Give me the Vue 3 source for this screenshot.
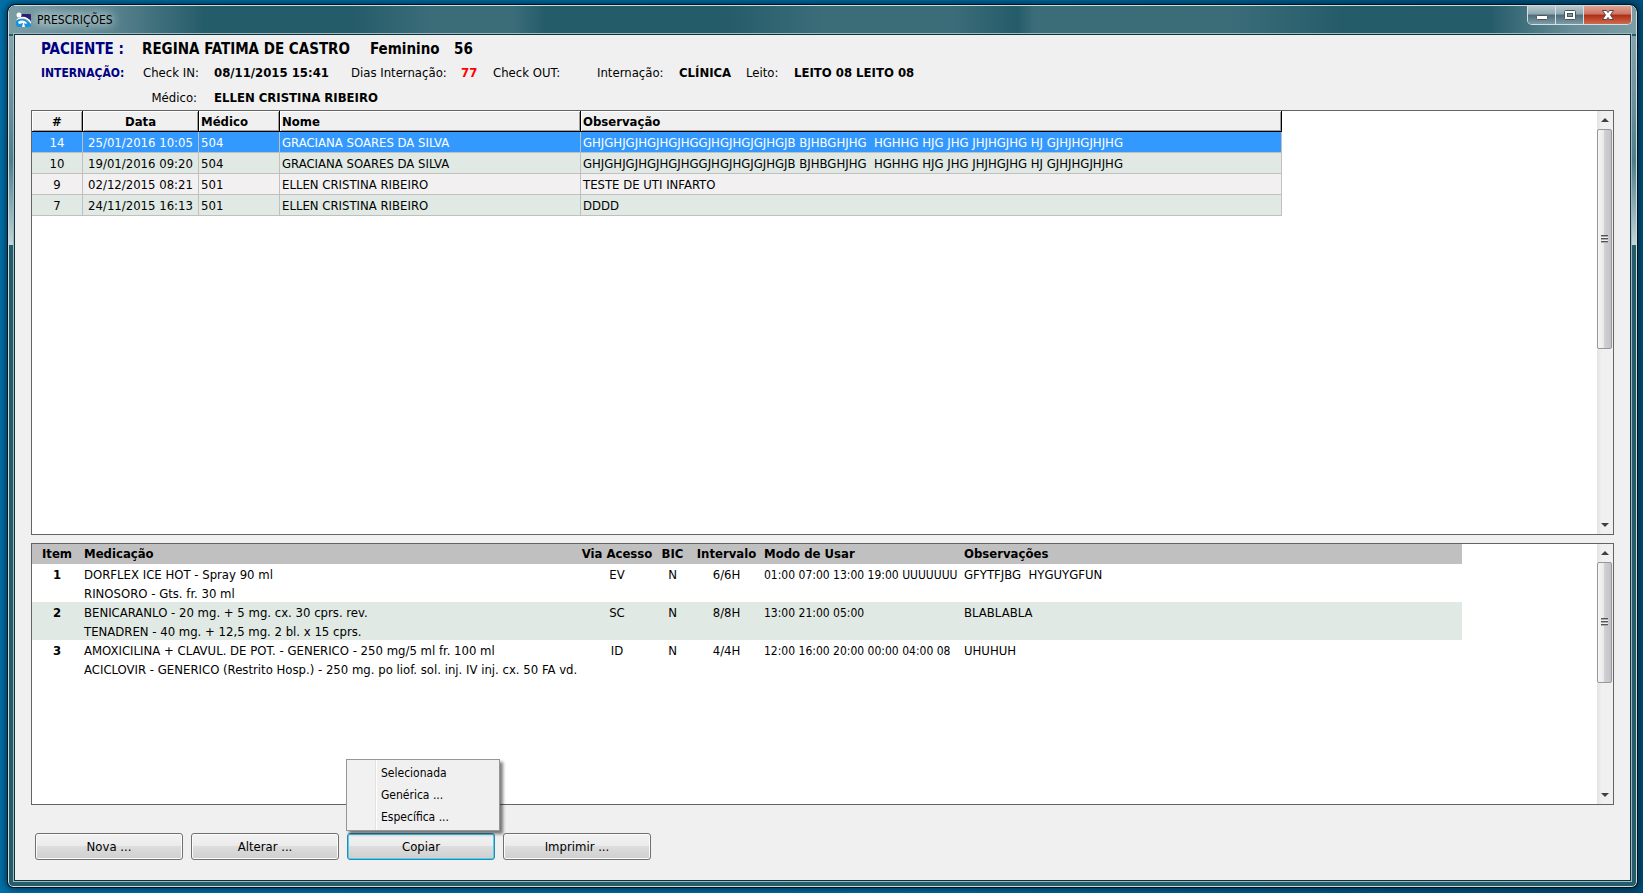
<script setup>
const visits = [
  { id: '14', date: '25/01/2016 10:05', code: '504', name: 'GRACIANA SOARES DA SILVA', note: 'GHJGHJGJHGJHGJHGGJHGJHGJGJHGJB BJHBGHJHG  HGHHG HJG JHG JHJHGJHG HJ GJHJHGJHJHG' },
  { id: '10', date: '19/01/2016 09:20', code: '504', name: 'GRACIANA SOARES DA SILVA', note: 'GHJGHJGJHGJHGJHGGJHGJHGJGJHGJB BJHBGHJHG  HGHHG HJG JHG JHJHGJHG HJ GJHJHGJHJHG' },
  { id: '9', date: '02/12/2015 08:21', code: '501', name: 'ELLEN CRISTINA RIBEIRO', note: 'TESTE DE UTI INFARTO' },
  { id: '7', date: '24/11/2015 16:13', code: '501', name: 'ELLEN CRISTINA RIBEIRO', note: 'DDDD' },
]
const items = [
  { n: '1', meds: ['DORFLEX ICE HOT - Spray 90 ml', 'RINOSORO - Gts. fr. 30 ml'], via: 'EV', bic: 'N', every: '6/6H', use: '01:00 07:00 13:00 19:00 UUUUUUU', obs: 'GFYTFJBG  HYGUYGFUN' },
  { n: '2', meds: ['BENICARANLO - 20 mg. + 5 mg. cx. 30 cprs. rev.', 'TENADREN - 40 mg. + 12,5 mg. 2 bl. x 15 cprs.'], via: 'SC', bic: 'N', every: '8/8H', use: '13:00 21:00 05:00', obs: 'BLABLABLA' },
  { n: '3', meds: ['AMOXICILINA + CLAVUL. DE POT. - GENERICO - 250 mg/5 ml fr. 100 ml', 'ACICLOVIR - GENERICO (Restrito Hosp.) - 250 mg. po liof. sol. inj. IV inj. cx. 50 FA vd.'], via: 'ID', bic: 'N', every: '4/4H', use: '12:00 16:00 20:00 00:00 04:00 08', obs: 'UHUHUH' },
]
</script>

<template>
  <div class="desktop">
    <div class="window">
      <header class="titlebar">
        <svg class="app-icon" viewBox="0 0 16 16" aria-hidden="true">
          <path d="M4 2h10q1 0 1 1v6C12 5 7 4 3 6z" fill="#2b1d72" />
          <path d="M1 7c5-4 11-2 14 3v2C11 6 5 5 0 9z" fill="#fff" />
          <path d="M0 9c4-3 9-2 11 0l4 3v2q0 1-1 1H2q-1 0-2-2z" fill="#1593df" />
          <path d="M2 10c3-2 6-2 9 1l-1 1-2-1 1 4H6l1-4-4 1z" fill="#fff" />
          <circle cx="3" cy="3" r="2.500" fill="#fff" />
        </svg>
        <h1>PRESCRIÇÕES</h1>
        <div class="controls">
          <button type="button" aria-label="Minimizar">
            <svg viewBox="0 0 14 12"><rect x="1.500" y="6.500" width="11" height="4" rx="1" fill="#fff" stroke="#4a5560" /></svg>
          </button>
          <button type="button" aria-label="Maximizar">
            <svg viewBox="0 0 14 12"><rect x="1.500" y="1.500" width="11" height="9" rx="1" fill="#fff" stroke="#4a5560" /><rect x="4.500" y="4.500" width="5" height="3" fill="#7d98a3" stroke="#4a5560" /></svg>
          </button>
          <button type="button" class="close" aria-label="Fechar">
            <svg viewBox="0 0 14 12"><path d="M1.500 1.500h4L7 3.500l1.500-2h4L9.500 6l3 4.500h-4L7 8.500l-1.500 2h-4L4.500 6z" fill="#fff" stroke="#5a4650" /></svg>
          </button>
        </div>
      </header>

      <main class="client">
        <section class="patient">
          <div class="line name-line">
            <span class="blue">PACIENTE :</span><strong>REGINA FATIMA DE CASTRO</strong><strong>Feminino</strong><strong>56</strong>
          </div>
          <div class="line stay-line">
            <span class="blue">INTERNAÇÃO:</span>
            <span>Check IN:</span><strong>08/11/2015 15:41</strong>
            <span>Dias Internação:</span><strong class="red">77</strong>
            <span>Check OUT:</span>
            <span>Internação:</span><strong>CLÍNICA</strong>
            <span>Leito:</span><strong>LEITO 08 LEITO 08</strong>
          </div>
          <div class="line doctor-line">
            <span class="right">Médico:</span><strong>ELLEN CRISTINA RIBEIRO</strong>
          </div>
        </section>

        <section class="panel visits">
          <div class="view">
            <table>
              <colgroup><col class="v1" /><col class="v2" /><col class="v3" /><col class="v4" /><col class="v5" /></colgroup>
              <thead>
                <tr><th class="mid">#</th><th class="mid">Data</th><th>Médico</th><th>Nome</th><th>Observação</th></tr>
              </thead>
              <tbody>
                <tr v-for="(v, i) in visits" :key="v.id" :class="{ selected: i === 0 }">
                  <td class="mid">{{ v.id }}</td><td class="mid">{{ v.date }}</td><td>{{ v.code }}</td><td>{{ v.name }}</td><td>{{ v.note }}</td>
                </tr>
              </tbody>
            </table>
          </div>
          <div class="scroll" aria-hidden="true">
            <i class="arrow up"></i><div class="track"><div class="thumb long"><i class="grip"></i></div></div><i class="arrow down"></i>
          </div>
        </section>

        <section class="panel items">
          <div class="view">
            <table>
              <colgroup><col class="i1" /><col class="i2" /><col class="i3" /><col class="i4" /><col class="i5" /><col class="i6" /><col class="i7" /></colgroup>
              <thead>
                <tr><th class="mid">Item</th><th>Medicação</th><th class="mid">Via Acesso</th><th class="mid">BIC</th><th class="mid">Intervalo</th><th>Modo de Usar</th><th>Observações</th></tr>
              </thead>
              <tbody>
                <tr v-for="it in items" :key="it.n">
                  <th scope="row" class="mid">{{ it.n }}</th>
                  <td><div v-for="m in it.meds" :key="m" class="med">{{ m }}</div></td>
                  <td class="mid">{{ it.via }}</td><td class="mid">{{ it.bic }}</td><td class="mid">{{ it.every }}</td><td class="use">{{ it.use }}</td><td>{{ it.obs }}</td>
                </tr>
              </tbody>
            </table>
          </div>
          <div class="scroll" aria-hidden="true">
            <i class="arrow up"></i><div class="track"><div class="thumb short"><i class="grip"></i></div></div><i class="arrow down"></i>
          </div>
        </section>

        <footer class="actions">
          <button type="button">Nova ...</button>
          <button type="button">Alterar ...</button>
          <div class="copy">
            <div class="menu" role="menu">
              <button type="button" role="menuitem">Selecionada</button>
              <button type="button" role="menuitem">Genérica ...</button>
              <button type="button" role="menuitem">Específica ...</button>
            </div>
            <button type="button" class="focused" aria-haspopup="menu" aria-expanded="true">Copiar</button>
          </div>
          <button type="button">Imprimir ...</button>
        </footer>
      </main>
    </div>
  </div>
</template>

<style>
body { margin: 0; background: #005f92; }
</style>

<style scoped>
* { box-sizing: border-box; }
.desktop {
  min-height: 100vh;
  display: flex;
  padding: 5px 6px 6px 8px;
  background: linear-gradient(100deg, #0072aa, #006ba2 60%, #004b74);
  font: 13px/16px "DejaVu Sans Condensed", "DejaVu Sans", sans-serif;
  color: #000;
}
.window {
  flex: 1;
  min-width: 0;
  display: flex;
  flex-direction: column;
  padding: 0 5px 5px;
  border: 1px solid #c9dde2;
  border-radius: 7px 7px 5px 5px;
  outline: 1px solid #06151d;
  box-shadow: 0 0 8px 1px #001c30;
  background:
    linear-gradient(#86a3ac, #6e929c 30%, #4f7f8a 60%, #c3d5d9) 0 30px / 100% 209px no-repeat,
    #255c6a;
}
.titlebar {
  height: 28px; display: flex; align-items: flex-start; margin: 0 -5px; padding: 0 4px 0 5px;
  background:
    linear-gradient(90deg, rgba(255,255,255,.4), rgba(255,255,255,.25) 6%, rgba(255,255,255,0) 12% 21%, rgba(255,255,255,.1) 26% 31%, rgba(255,255,255,0) 33% 44%, rgba(255,255,255,.1) 50% 58%, rgba(255,255,255,0) 62%, rgba(255,255,255,.1) 63% 75%, rgba(255,255,255,0) 82% 91%, rgba(255,255,255,.3) 96%, rgba(255,255,255,.4)),
    #255c6a;
  border-radius: 6px 6px 0 0;
}
.app-icon { width: 16px; height: 16px; margin: 6px 5px 0 2px; }
h1 { margin: 5px 0 0; font: inherit; font-size: 12px; line-height: 18px; text-shadow: 0 0 8px #fff, 0 0 12px #dfe; }
.controls { margin-left: auto; display: flex; border: 1px solid #d3e0e4; border-top: 0; border-radius: 0 0 5px 5px; overflow: hidden; }
.controls button {
  width: 28px; height: 18px; padding: 0; border: 0; border-right: 1px solid #d3e0e4;
  display: grid; place-items: center;
  background: linear-gradient(#b9c9cf, #8fa6af 45%, #4a6b77 50%, #7e9ca6);
}
.controls .close { width: 47px; border-right: 0; background: linear-gradient(#e0a293, #cd7564 45%, #b02d14 50%, #cf6a4e); }
.controls svg { width: 14px; height: 12px; }
.client {
  flex: 1; min-height: 0; display: flex; flex-direction: column;
  padding: 0 16px 20px;
  border: 1px solid #10303a;
  outline: 1px solid #9cbcc3;
  background: #f0f0f0;
}
strong, th, .blue { font-weight: bold; }
.patient { height: 75px; padding: 3px 0 0 10px; white-space: nowrap; }
.line { display: grid; align-items: center; }
.name-line { height: 22px; grid-template-columns: 101px 228px 84px auto; font-size: 15px; }
.stay-line { height: 26px; grid-template-columns: 102px 71px 137px 110px 32px 104px 82px 67px 48px auto; }
.stay-line .blue { font-size: 12px; }
.doctor-line { height: 24px; grid-template-columns: 156px auto; column-gap: 17px; }
.blue { color: #000080; }
.red { color: #f00; }
.right { text-align: right; }
.panel { display: flex; border: 1px solid #646464; background: #fff; min-height: 0; }
.visits { flex: 425 1 0; }
.items { flex: 262 1 0; margin-top: 8px; }
.view { flex: 1; min-width: 0; overflow: hidden; }
table { table-layout: fixed; border-collapse: separate; border-spacing: 0; }
th, td { padding: 0; text-align: left; white-space: pre; overflow: hidden; }
.visits table { width: 1250px; }
.v1 { width: 51px; } .v2 { width: 116px; } .v3 { width: 81px; } .v4 { width: 301px; } .v5 { width: 701px; }
.visits thead th { height: 21px; background: #f0f0f0; border-right: 1px solid #000; border-bottom: 1px solid #000; box-shadow: inset 1px 1px #fff, inset -1px -1px #a0a0a0; padding: 2px 0 0 2px; }
.visits td { height: 21px; border-right: 1px solid #c0c0c0; border-bottom: 1px solid #c0c0c0; padding: 2px 0 0 2px; background: #f2f0f1; }
.visits tr:nth-child(even) td { background: #e0e9e3; }
.visits tr.selected td { background: #3399ff; color: #fff; }
.items table { width: 1430px; }
.i1 { width: 50px; } .i2 { width: 498px; } .i3 { width: 74px; } .i4 { width: 37px; } .i5 { width: 71px; } .i6 { width: 200px; } .i7 { width: 500px; }
.items thead th { height: 20px; padding: 1px 0 0 2px; background: #c0c0c0; }
.items tbody th, .items td { height: 38px; line-height: 17px; vertical-align: top; padding: 2px 0 0 2px; }
.visits th.mid, .visits td.mid, .items th.mid, .items td.mid { text-align: center; padding-left: 0; }
.items td.use { font-size: 12px; padding-top: 3px; }
.med + .med { margin-top: 2px; }
.items tbody tr:nth-child(even) > * { background: #e0e9e3; }
.scroll { width: 16px; display: flex; flex-direction: column; background: linear-gradient(90deg, #e3e3e3, #f0f0f0 30%); }
.arrow { height: 18px; display: grid; place-items: center; }
.arrow::after { content: ""; border: 4px solid transparent; border-top-width: 0; border-bottom: 4px solid #404040; }
.arrow.down::after { border-bottom-width: 0; border-top: 4px solid #404040; }
.track { flex: 1; min-height: 0; }
.thumb { width: 15px; border: 1px solid #979797; border-radius: 2px; background: linear-gradient(90deg, #f6f6f6, #e9e9eb 45%, #d0d0d4 50%, #c2c2c8); display: grid; place-items: center; }
.long { height: 57%; }
.short { height: 54%; }
.grip { width: 7px; height: 8px; background: repeating-linear-gradient(#555 0 1px, #aaa 1px 2px, #eee 2px 3px); }
.actions { display: flex; gap: 8px; margin: 28px 0 0 4px; }
.actions > button, .focused {
  width: 148px; height: 27px; padding: 0; font: inherit; color: #000;
  border: 1px solid #707070; border-radius: 3px; box-shadow: inset 0 0 0 1px #fbfbfb;
  background: linear-gradient(#f2f2f2, #ebebeb 48%, #dddddd 50%, #cfcfcf);
}
.copy { position: relative; display: flex; }
.copy .focused { border-color: #2f86ad; box-shadow: inset 0 0 0 1px #49d2f8; }
.menu {
  position: absolute; left: -1px; bottom: 29px; width: 154px; padding: 2px;
  border: 1px solid #979797; background: linear-gradient(90deg, #f1f1f1 28px, #e2e2e2 28px 29px, #fff 29px 30px, #f0f0f0 30px);
  box-shadow: 3px 3px 3px rgba(0, 0, 0, .5);
}
.menu button { display: block; width: 100%; height: 22px; padding: 0 0 0 32px; border: 0; background: none; font: inherit; font-size: 12px; text-align: left; }
</style>
